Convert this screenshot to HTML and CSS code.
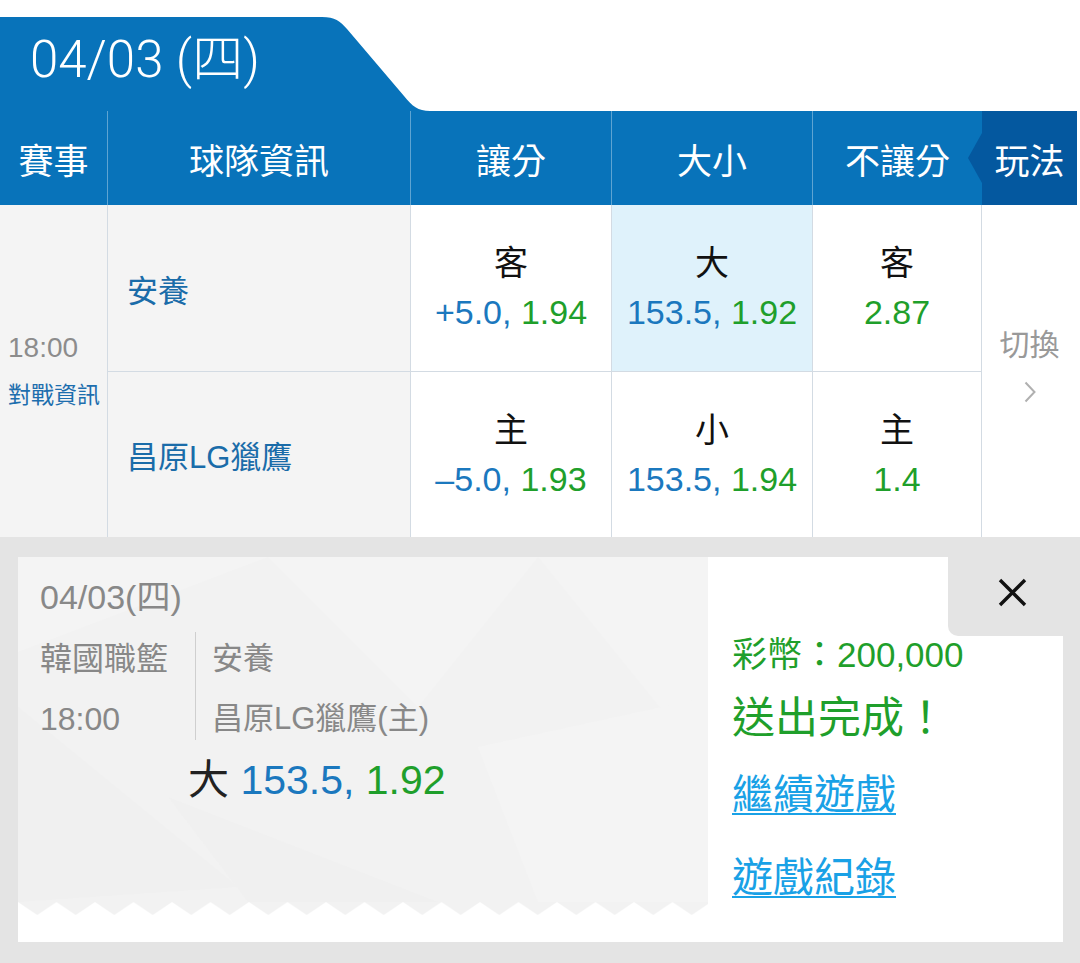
FILE: index.html
```html
<!DOCTYPE html>
<html lang="zh-Hant">
<head>
<meta charset="utf-8">
<title>賽事</title>
<link rel="stylesheet" href="styles.css">
</head>
<body>
<div class="page">
  <div class="title-row">
    <div class="tab">04/03 (四)</div>
    <svg class="tab-slope" width="108" height="94" viewBox="0 0 108 94"><path d="M0,0 C13,0 18,4 25,12 L82,79 C90,89 96,94 108,94 L0,94 Z" fill="#0873ba"/></svg>
  </div>

  <div class="table">
    <div class="th">賽事</div>
    <div class="th">球隊資訊</div>
    <div class="th">讓分</div>
    <div class="th">大小</div>
    <div class="th th-nb">不讓分</div>
    <div class="th th-play">玩法</div>

    <div class="cell time">
      <div class="t-time">18:00</div>
      <div class="t-info">對戰資訊</div>
    </div>
    <div class="cell team r1">安養</div>
    <div class="cell odds r1">
      <div class="lbl">客</div>
      <div><span class="b">+5.0,</span> <span class="g">1.94</span></div>
    </div>
    <div class="cell odds r1 hl">
      <div class="lbl">大</div>
      <div><span class="b">153.5,</span> <span class="g">1.92</span></div>
    </div>
    <div class="cell odds r1">
      <div class="lbl">客</div>
      <div><span class="g">2.87</span></div>
    </div>
    <div class="cell switch">
      <div class="sw-text">切換</div>
      <svg class="chev" width="12" height="22" viewBox="0 0 12 22"><polyline points="1.5,1.5 10.5,11 1.5,20.5" fill="none" stroke="#b0b0b0" stroke-width="2"/></svg>
    </div>

    <div class="cell team">昌原LG獵鷹</div>
    <div class="cell odds">
      <div class="lbl">主</div>
      <div><span class="b">–5.0,</span> <span class="g">1.93</span></div>
    </div>
    <div class="cell odds">
      <div class="lbl">小</div>
      <div><span class="b">153.5,</span> <span class="g">1.94</span></div>
    </div>
    <div class="cell odds">
      <div class="lbl">主</div>
      <div><span class="g">1.4</span></div>
    </div>
  </div>

  <div class="result">
    <div class="card">
      <div class="card-left">
        <svg class="card-bg" width="690" height="385" viewBox="0 0 690 385">
          <defs>
            <pattern id="zz" x="0" y="345" width="38.5" height="13" patternUnits="userSpaceOnUse">
              <rect width="38.5" height="13" fill="#ffffff"/>
              <polygon points="0,0 38.5,0 19.25,13" fill="#f2f2f2"/>
            </pattern>
          </defs>
          <rect width="690" height="345" fill="#f2f2f2"/>
          <polygon points="0,0 250,0 0,95" fill="#f4f4f4"/>
          <polygon points="250,0 520,0 400,150" fill="#f4f4f4"/>
          <polygon points="520,0 690,0 690,210" fill="#f4f4f4"/>
          <polygon points="0,150 220,330 0,345" fill="#f0f0f0"/>
          <polygon points="150,240 420,345 230,345" fill="#f0f0f0"/>
          <polygon points="460,190 690,140 690,345 520,345" fill="#f4f4f4"/>
          <rect y="345" width="690" height="13" fill="url(#zz)"/>
          <rect y="358" width="690" height="27" fill="#ffffff"/>
        </svg>
        <div class="card-info">
          <div class="ci-date">04/03(四)</div>
          <div class="ci-match">
            <div class="ci-league">
              <div>韓國職籃</div>
              <div>18:00</div>
            </div>
            <div class="ci-div"></div>
            <div class="ci-teams">
              <div>安養</div>
              <div>昌原LG獵鷹(主)</div>
            </div>
          </div>
          <div class="ci-pick"><span class="k">大</span> <span class="b">153.5,</span> <span class="g">1.92</span></div>
        </div>
      </div>
      <div class="card-right">
        <div class="close">
          <svg width="29" height="29" viewBox="0 0 29 29"><path d="M2,2 L27,27 M27,2 L2,27" stroke="#111" stroke-width="3.4" fill="none"/></svg>
        </div>
        <div class="cr-body">
          <div class="coin">彩幣：200,000</div>
          <div class="done">送出完成！</div>
          <a class="link link1" href="#">繼續遊戲</a>
          <a class="link link2" href="#">遊戲紀錄</a>
        </div>
      </div>
    </div>
  </div>
</div>
</body>
</html>
```

FILE: styles.css
```css
html, body {
  margin: 0;
  padding: 0;
  background: #ffffff;
}

body {
  font-family: "Liberation Sans", "Noto Sans CJK TC", sans-serif;
  color: #111;
}

.page {
  width: 1080px;
  padding-top: 17px;
}

/* title tab */
.title-row {
  display: flex;
  height: 94px;
}

.tab {
  width: 322px;
  box-sizing: border-box;
  background: #0873ba;
  color: #fff;
  font-family: Roboto, "Noto Sans CJK TC", sans-serif;
  font-weight: 300;
  font-size: 51px;
  line-height: 86px;
  padding-left: 30px;
  padding-bottom: 8px;
  white-space: nowrap;
}

.tab-slope {
  display: block;
}

/* table */
.table {
  display: grid;
  width: 1077px;
  grid-template-columns: 108px 303px 201px 201px 169px 95px;
  grid-template-rows: 94px 167px 165px;
}

.th {
  background: #0873ba;
  color: #fff;
  font-size: 35px;
  display: flex;
  align-items: center;
  justify-content: center;
  box-sizing: border-box;
  border-right: 1px solid rgba(255, 255, 255, 0.35);
}

.th-nb {
  border-right: none;
}

.th-play {
  position: relative;
  background: #04589f;
  border-right: none;
}

.th-play::before {
  content: "";
  position: absolute;
  left: -14px;
  top: 22px;
  width: 14px;
  height: 50px;
  background: #04589f;
  clip-path: polygon(100% 0, 0 50%, 100% 100%);
}

.cell {
  box-sizing: border-box;
  border-right: 1px solid #d3dbe3;
  background: #ffffff;
}

.r1 {
  border-bottom: 1px solid #d3dbe3;
}

.time {
  grid-row: span 2;
  background: #f4f4f4;
  display: flex;
  flex-direction: column;
  justify-content: center;
  padding-left: 8px;
  padding-bottom: 4px;
}

.t-time {
  font-size: 28px;
  line-height: 40px;
  color: #8c8c8c;
}

.t-info {
  margin-top: 12px;
  font-size: 23px;
  line-height: 30px;
  color: #1d6eae;
  white-space: nowrap;
}

.team {
  background: #f4f4f4;
  color: #1a6ca9;
  font-size: 31px;
  display: flex;
  align-items: center;
  padding-left: 19px;
}

.odds {
  display: flex;
  flex-direction: column;
  align-items: center;
  justify-content: center;
  font-size: 34px;
  line-height: 49px;
  white-space: nowrap;
}

.lbl {
  color: #111;
}

.hl {
  background: #dff2fb;
}

.b {
  color: #1b78be;
}

.g {
  color: #1f9f2b;
}

.switch {
  grid-row: span 2;
  border-right: none;
  display: flex;
  flex-direction: column;
  align-items: center;
  justify-content: center;
  padding-bottom: 12px;
}

.sw-text {
  font-size: 30px;
  line-height: 36px;
  color: #999;
}

.chev {
  display: block;
  margin-top: 18px;
}

/* result section */
.result {
  background: #e4e4e4;
  padding: 20px 17px 21px 18px;
}

.card {
  display: flex;
  height: 385px;
  background: #ffffff;
}

.card-left {
  width: 690px;
  display: grid;
}

.card-left > * {
  grid-area: 1 / 1;
}

.card-bg {
  display: block;
}

.card-info {
  padding: 20px 0 0 22px;
  color: #888;
}

.ci-date {
  font-size: 34px;
  line-height: 40px;
}

.ci-match {
  display: flex;
  margin-top: 12px;
}

.ci-league {
  width: 155px;
  font-size: 32px;
  line-height: 60px;
}

.ci-div {
  width: 1px;
  height: 108px;
  margin-top: 3px;
  background: #cfcfcf;
}

.ci-teams {
  padding-left: 16px;
  font-size: 31px;
  line-height: 60px;
  white-space: nowrap;
}

.ci-pick {
  margin: 6px 0 0 148px;
  font-size: 41px;
  line-height: 50px;
  white-space: nowrap;
}

.ci-pick .k {
  color: #222;
}

.card-right {
  flex: 1;
  display: flex;
  flex-direction: column;
}

.close {
  align-self: flex-end;
  width: 115px;
  height: 79px;
  box-sizing: border-box;
  background: #e4e4e4;
  border-bottom-left-radius: 10px;
  padding: 21px 0 0 50px;
}

.close svg {
  display: block;
}

.cr-body {
  padding-left: 24px;
}

.coin {
  font-size: 35px;
  line-height: 38px;
  color: #1f9f2b;
  white-space: nowrap;
}

.done {
  margin-top: 20px;
  font-size: 43px;
  line-height: 48px;
  color: #1f9f2b;
  white-space: nowrap;
}

.link {
  display: block;
  width: max-content;
  font-size: 41px;
  line-height: 48px;
  color: #19a1e6;
  text-decoration: underline;
  text-decoration-thickness: 2px;
  text-underline-offset: 4px;
}

.link1 {
  margin-top: 29px;
}

.link2 {
  margin-top: 35px;
}
```
